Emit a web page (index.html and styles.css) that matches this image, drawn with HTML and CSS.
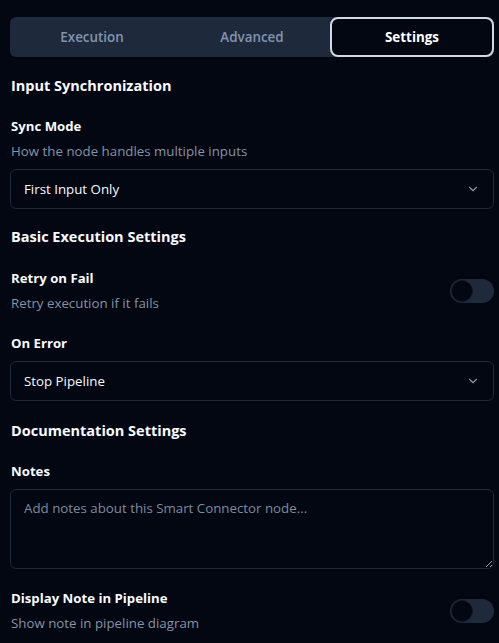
FILE: index.html
```html
<!DOCTYPE html>
<html lang="en">
<head>
<meta charset="utf-8">
<title>Node Settings</title>
<link rel="stylesheet" href="styles.css">
</head>
<body>
<div class="panel">
  <div class="tabs">
    <div class="tab">Execution</div>
    <div class="tab">Advanced</div>
    <div class="tab active">Settings</div>
  </div>

  <section class="section first">
    <h2 class="section-title">Input Synchronization</h2>
    <div class="field">
      <div class="label">Sync Mode</div>
      <div class="desc">How the node handles multiple inputs</div>
      <div class="select">
        <span>First Input Only</span>
        <svg class="chev" width="16" height="16" viewBox="0 0 24 24" fill="none" stroke="currentColor" stroke-width="2" stroke-linecap="round" stroke-linejoin="round"><path d="m6 9 6 6 6-6"/></svg>
      </div>
    </div>
  </section>

  <section class="section second">
    <h2 class="section-title">Basic Execution Settings</h2>
    <div class="field row">
      <div class="row-text">
        <div class="label">Retry on Fail</div>
        <div class="desc">Retry execution if it fails</div>
      </div>
      <div class="toggle"><span class="knob"></span></div>
    </div>
    <div class="field spaced">
      <div class="label">On Error</div>
      <div class="select">
        <span>Stop Pipeline</span>
        <svg class="chev" width="16" height="16" viewBox="0 0 24 24" fill="none" stroke="currentColor" stroke-width="2" stroke-linecap="round" stroke-linejoin="round"><path d="m6 9 6 6 6-6"/></svg>
      </div>
    </div>
  </section>

  <section class="section third">
    <h2 class="section-title">Documentation Settings</h2>
    <div class="field">
      <div class="label">Notes</div>
      <textarea class="textarea" placeholder="Add notes about this Smart Connector node..."></textarea>
    </div>
    <div class="field row spaced2">
      <div class="row-text">
        <div class="label">Display Note in Pipeline</div>
        <div class="desc">Show note in pipeline diagram</div>
      </div>
      <div class="toggle"><span class="knob"></span></div>
    </div>
  </section>
</div>
</body>
</html>
```

FILE: styles.css
```css
* { box-sizing: border-box; }

html, body {
  margin: 0;
  background: #030712;
  height: 100%;
  overflow: hidden;
}

body {
  font-family: "Open Sans", "Noto Sans", sans-serif;
  color: #f8fafc;
  font-size: 13.3px;
}

.panel {
  padding: 17px 5px 0 10px;
}

.tabs {
  display: grid;
  grid-template-columns: 160px 160px 1fr;
  height: 40px;
  background: #1e293b;
  border-radius: 6px;
  margin-bottom: 17px;
}

.tab {
  display: flex;
  align-items: center;
  justify-content: center;
  padding-left: 4px;
  font-weight: 600;
  font-size: 13.4px;
  color: #8294b0;
}

.tab.active {
  padding-left: 0;
  background: #030712;
  border: 2px solid #d1d9e6;
  border-radius: 8px;
  color: #ffffff;
  font-weight: 700;
}

.section { margin-bottom: 16px; }
.section.second { margin-bottom: 18px; }

.section-title {
  margin: 0 0 19px;
  font-size: 14.5px;
  line-height: 24px;
  font-weight: 700;
  color: #f8fafc;
  padding-left: 1px;
}

.section.first .section-title,
.section.third .section-title { margin-bottom: 18px; }

.label {
  font-size: 13.2px;
  line-height: 20px;
  font-weight: 700;
  color: #f8fafc;
  padding-left: 1px;
}

.desc {
  margin-top: 5px;
  font-size: 13.3px;
  line-height: 20px;
  color: #8592a8;
  padding-left: 1px;
}

.select {
  margin-top: 8px;
  height: 40px;
  border: 1px solid #1e293b;
  border-radius: 6px;
  display: flex;
  align-items: center;
  justify-content: space-between;
  padding: 0 13px;
  color: #f8fafc;
}

.select .chev {
  color: #8b95a7;
  width: 14px;
  height: 14px;
}

.row {
  display: flex;
  align-items: center;
  justify-content: space-between;
}

.toggle {
  width: 44px;
  height: 24px;
  border-radius: 12px;
  background: #1e293b;
  padding: 1px;
  display: flex;
  align-items: center;
}

.knob {
  width: 22px;
  height: 22px;
  border-radius: 50%;
  background: #030712;
  border: 1px solid #111827;
}

.spaced { margin-top: 20px; }
.spaced2 { margin-top: 19px; }

.textarea {
  display: block;
  width: 100%;
  margin-top: 8px;
  height: 80px;
  background: #030712;
  border: 1px solid #1e293b;
  border-radius: 6px;
  padding: 8px 13px;
  font-family: inherit;
  font-size: 13.3px;
  line-height: 20px;
  color: #f8fafc;
  resize: vertical;
  outline: none;
}

.textarea::placeholder { color: #7d8aa0; }
```
